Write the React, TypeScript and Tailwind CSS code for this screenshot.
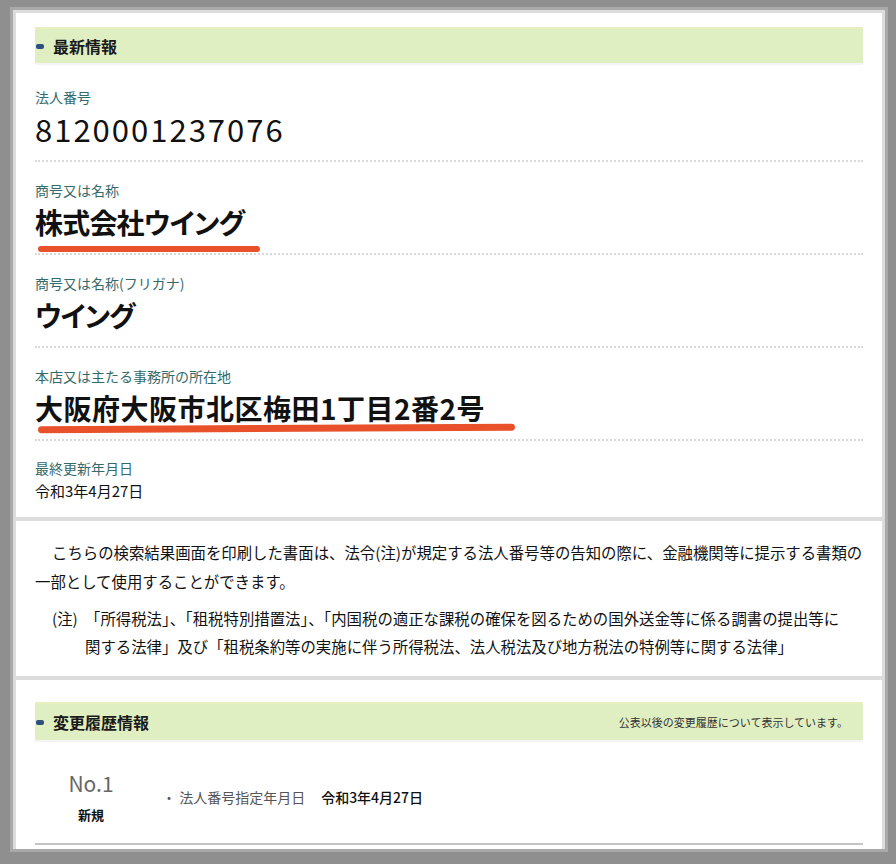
import React from "react";

const font = {
  fontFamily: '"Noto Sans CJK JP", "Noto Sans", sans-serif',
};

function SectionHeader({ title, note }: { title: string; note?: string }) {
  return (
    <div className="h-full flex items-center justify-between bg-[#e0efc2] border-t-2 border-[#e6efbd] shadow-[0_2px_0_#f4f4f4] pl-[1px] pr-[15px]">
      <div className="flex items-center gap-[9px]">
        <span className="block w-[8px] h-[5px] rounded-[2px] bg-[#2f4f7f]" />
        <span className="text-[16px] font-bold text-[#1a1a1a] leading-none">{title}</span>
      </div>
      {note && <span className="text-[11px] text-[#333]">{note}</span>}
    </div>
  );
}

function Field({
  label,
  value,
  valueClass,
  underline,
}: {
  label: string;
  value: string;
  valueClass: string;
  underline?: string;
}) {
  return (
    <div className="pt-[19px] pb-[13px] border-b-2 border-dotted border-[#d9d9d9]">
      <div className="text-[14px] leading-[18px] text-[#356a6a]">{label}</div>
      <div className="relative mt-[5px]">
        <div className={valueClass}>{value}</div>
        {underline && <span className={underline} />}
      </div>
    </div>
  );
}

export default function App() {
  return (
    <div className="min-h-screen bg-[#8f8f8f] pt-[7px] pl-[10px]" style={font}>
      <div className="w-[878px] border-[3px] border-[#a9a9a9] bg-[#dcdcdc] p-[3px] pb-0 flex flex-col gap-[4px]">
        {/* 最新情報 */}
        <div className="bg-white px-[19px] pt-[14px] pb-[17px]">
          <div className="h-[36px]">
            <SectionHeader title="最新情報" />
          </div>
          <div className="mt-[6px]">
            <Field
              label="法人番号"
              value="8120001237076"
              valueClass="text-[31px] leading-[36px] text-[#111] tracking-[2px]"
            />
            <Field
              label="商号又は名称"
              value="株式会社ウイング"
              valueClass="text-[28px] leading-[36px] font-bold text-[#111] tracking-[-0.8px] [font-feature-settings:'palt']"
              underline="absolute left-[3px] top-[42px] w-[222px] h-[6px] rounded-full bg-[#e9512b]"
            />
            <Field
              label="商号又は名称(フリガナ)"
              value="ウイング"
              valueClass="text-[28px] leading-[36px] font-bold text-[#111] tracking-[-1px] [font-feature-settings:'palt']"
            />
            <Field
              label="本店又は主たる事務所の所在地"
              value="大阪府大阪市北区梅田1丁目2番2号"
              valueClass="text-[28px] leading-[36px] font-bold text-[#111] tracking-[0.5px]"
              underline="absolute left-[3px] top-[35px] w-[477px] h-[7px] rounded-full bg-[#e9512b] -rotate-[0.3deg]"
            />
            <div className="pt-[18px]">
              <div className="text-[14px] leading-[18px] text-[#356a6a]">最終更新年月日</div>
              <div className="text-[15px] leading-[18px] text-[#111] mt-[5px]">令和3年4月27日</div>
            </div>
          </div>
        </div>

        {/* 注意書き */}
        <div className="bg-white pl-[19px] pr-[10px] pt-[17px] pb-[16px] text-[15.4px] text-[#111]">
          <p className="leading-[29px] indent-[17px]">
            こちらの検索結果画面を印刷した書面は、法令(注)が規定する法人番号等の告知の際に、金融機関等に提示する書類の
            <br />
            一部として使用することができます。
          </p>
          <p className="mt-[8px] leading-[28px] pl-[50px] -indent-[33px]">
            <span className="inline-block w-[33px] indent-0">(注)</span>
            「所得税法」、「租税特別措置法」、「内国税の適正な課税の確保を図るための国外送金等に係る調書の提出等に
            <br />
            関する法律」及び「租税条約等の実施に伴う所得税法、法人税法及び地方税法の特例等に関する法律」
          </p>
        </div>

        {/* 変更履歴情報 */}
        <div className="bg-white px-[19px] pt-[22px] pb-[4px]">
          <div className="h-[38px]">
            <SectionHeader title="変更履歴情報" note="公表以後の変更履歴について表示しています。" />
          </div>
          <div className="flex items-center pt-[31px] pb-[19px] border-b-2 border-[#c4c4c4]">
            <div className="w-[112px] flex flex-col items-center">
              <span className="text-[21px] leading-[24px] text-[#666]">No.1</span>
              <span className="mt-[11px] text-[13px] leading-[18px] font-bold text-[#111]">新規</span>
            </div>
            <div className="ml-[15px] flex items-center text-[14px]">
              <span className="text-[#555]">・ 法人番号指定年月日</span>
              <span className="ml-[16px] text-[#111] font-medium">令和3年4月27日</span>
            </div>
          </div>
        </div>
      </div>
    </div>
  );
}
